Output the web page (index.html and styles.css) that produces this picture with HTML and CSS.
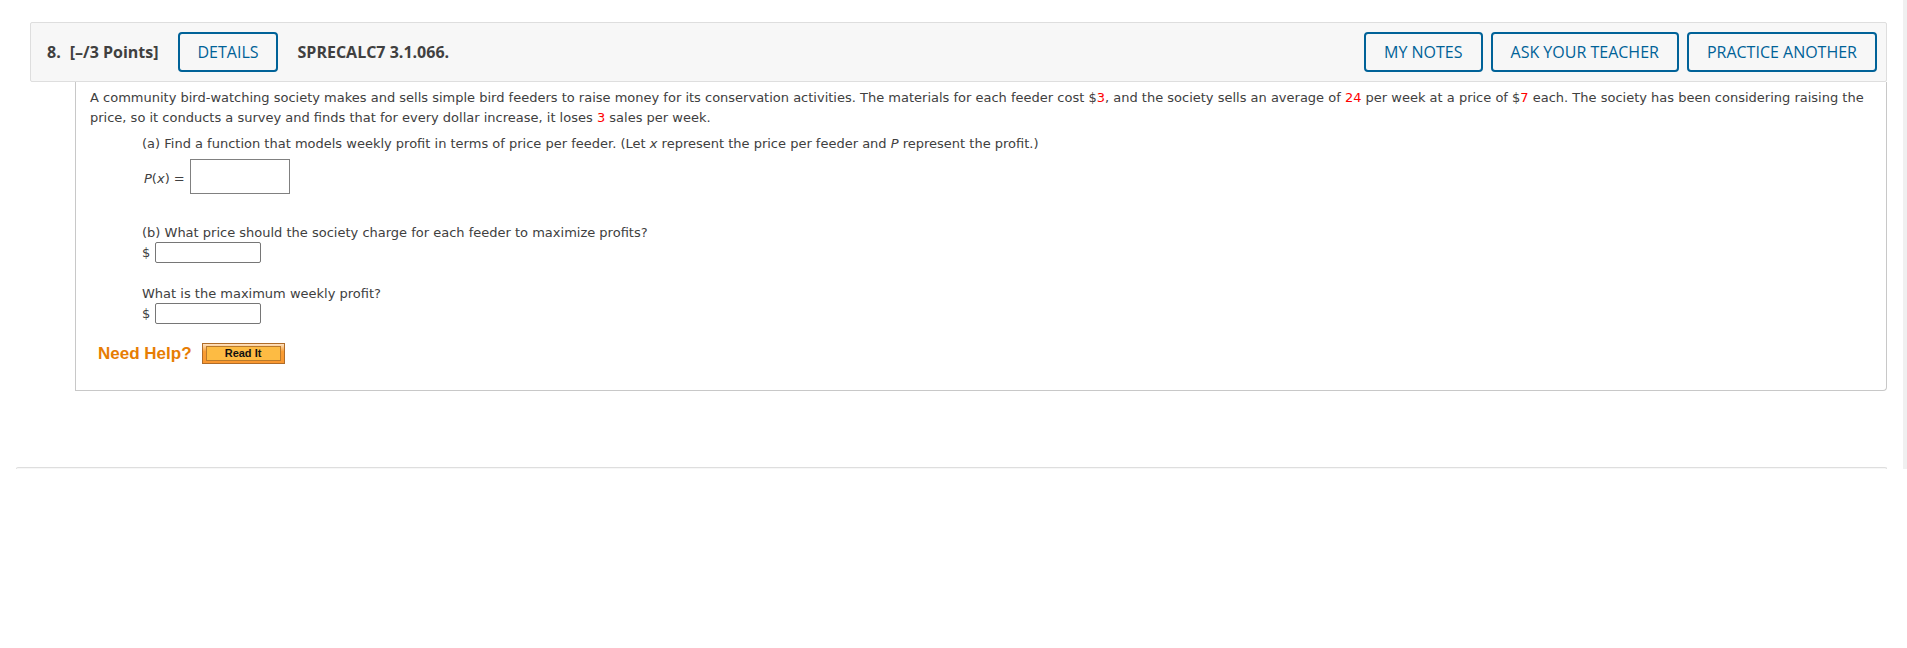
FILE: index.html
```html
<!DOCTYPE html>
<html lang="en">
<head>
<meta charset="utf-8">
<title>SPRECALC7 3.1.066.</title>
<link rel="stylesheet" href="styles.css">
</head>
<body>
<div class="page">
  <main class="question">
    <header class="question-header">
      <span class="number">8.</span>
      <span class="points">[–/3 Points]</span>
      <button class="action details" type="button">DETAILS</button>
      <h1 class="title">SPRECALC7 3.1.066.</h1>
      <div class="actions">
        <button class="action" type="button">MY NOTES</button>
        <button class="action" type="button">ASK YOUR TEACHER</button>
        <button class="action" type="button">PRACTICE ANOTHER</button>
      </div>
    </header>
    <section class="question-body">
      <p class="text">A community bird-watching society makes and sells simple bird feeders to raise money for its conservation activities. The materials for each feeder cost $<span class="value">3</span>, and the society sells an average of <span class="value">24</span> per week at a price of $<span class="value">7</span> each. The society has been considering raising the price, so it conducts a survey and finds that for every dollar increase, it loses <span class="value">3</span> sales per week.</p>
      <div class="parts">
        <div class="part part-a">
          <p class="text prompt">(a) Find a function that models weekly profit in terms of price per feeder. (Let <i>x</i> represent the price per feeder and <i>P</i> represent the profit.)</p>
          <div class="answer formula">
            <label for="profit-function"><i>P</i>(<i>x</i>) =</label>
            <input class="math-box" id="profit-function" type="text">
          </div>
        </div>
        <div class="part">
          <p class="text prompt">(b) What price should the society charge for each feeder to maximize profits?</p>
          <div class="answer">
            <label for="price">$</label>
            <input class="number-box" id="price" type="text">
          </div>
        </div>
        <div class="part">
          <p class="text prompt">What is the maximum weekly profit?</p>
          <div class="answer">
            <label for="max-profit">$</label>
            <input class="number-box" id="max-profit" type="text">
          </div>
        </div>
      </div>
      <div class="help">
        <span class="help-label">Need Help?</span>
        <button class="read-it" type="button"><span class="read-it-face">Read It</span></button>
      </div>
    </section>
  </main>
  <div class="next-card"></div>
</div>
</body>
</html>
```
FILE: styles.css
```css
* {
  box-sizing: border-box;
}

body {
  margin: 0;
  background: #fff;
  color: #404040;
  font-family: Verdana, "DejaVu Sans", sans-serif;
  font-size: 13px;
  line-height: 20px;
}

.page {
  padding: 22px 16px 0;
  border-right: 4px solid #f0f0f0;
}

.question {
  padding-left: 14px;
}

.question-header {
  display: flex;
  align-items: center;
  padding: 9px;
  padding-left: 16px;
  border: 1px solid #dedede;
  border-radius: 2px;
  background: #f7f7f7;
  font-family: "Open Sans", sans-serif;
  font-size: 16px;
  font-weight: 700;
}

.points {
  margin-left: 9px;
}

.title {
  margin: 0;
  font-size: 16px;
  font-weight: 700;
}

.actions {
  display: flex;
  gap: 8px;
  margin-left: auto;
}

.action {
  height: 40px;
  padding: 0 18px;
  border: 2px solid #006298;
  border-radius: 4px;
  background: transparent;
  color: #006298;
  font: 500 16px/20px "Open Sans", sans-serif;
}

.details {
  margin: 0 20px;
  padding: 0 17px;
}

.question-body {
  margin-left: 45px;
  padding: 6px 15px 26px 14px;
  border: 1px solid #c8c8c8;
  border-top: 0;
  border-radius: 0 0 4px 0;
}

.text {
  margin: 0;
}

.value {
  color: #f00;
}

.parts {
  margin: 5px 0 0 52px;
}

.part {
  margin-bottom: 20px;
}

.part:last-child {
  margin-bottom: 19px;
}

.part-a {
  margin-bottom: 28px;
}

.prompt {
  padding-top: 2px;
  line-height: 18px;
}

.answer {
  display: flex;
  align-items: center;
  gap: 5px;
}

.formula {
  margin: 6px 0 0 2px;
}

.formula label {
  padding-top: 4px;
}

.math-box {
  width: 100px;
  height: 35px;
  border: 1px solid #808080;
}

.number-box {
  width: 106px;
  height: 21px;
  border: 1px solid #767676;
  border-radius: 2px;
}

.help {
  display: flex;
  align-items: center;
  gap: 10px;
  padding-left: 8px;
  font-family: Arial, "Liberation Sans", sans-serif;
}

.help-label {
  color: #e77d04;
  font-size: 17px;
  font-weight: 700;
}

.read-it {
  width: 83px;
  height: 21px;
  padding: 2px 3px;
  border: 1px solid #b06c28;
  background: linear-gradient(#fde3c4, #f99d33 40%, #f99730);
}

.read-it-face {
  display: block;
  border: 1px solid #b97a2b;
  background: #fdbb43;
  color: #111;
  font: 700 11px/13px Arial, "Liberation Sans", sans-serif;
}

.next-card {
  height: 2px;
  margin-top: 76px;
  border: 1px solid #dedede;
  border-bottom: 0;
  border-radius: 2px 2px 0 0;
  background: #f7f7f7;
}
```
